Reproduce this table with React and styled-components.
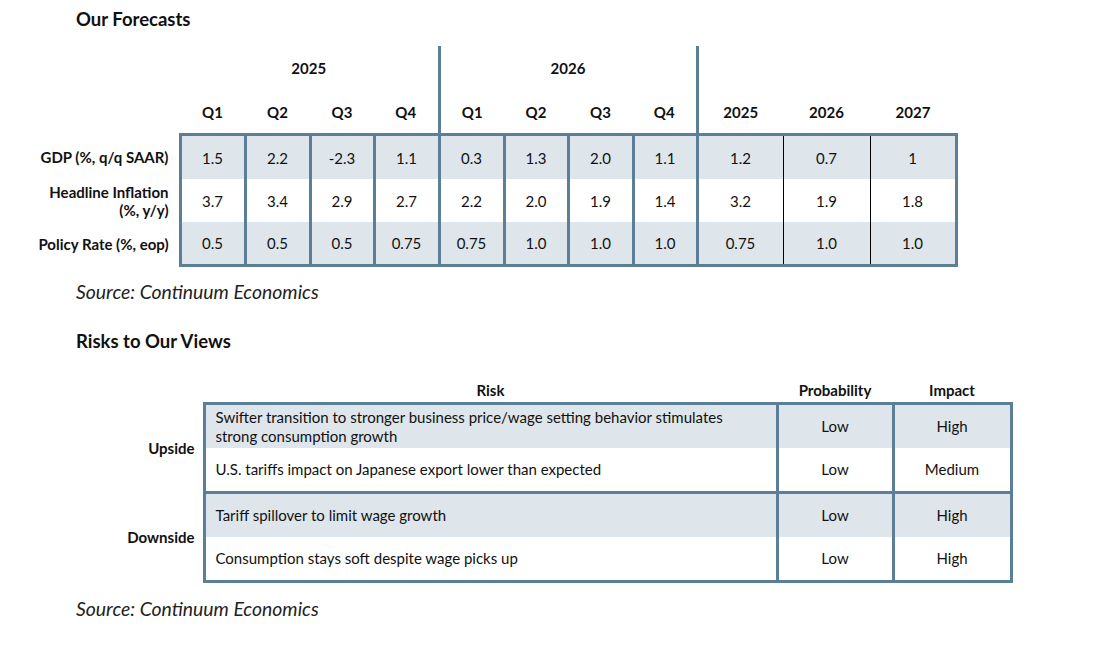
import React from 'react';
import styled, { createGlobalStyle } from 'styled-components';

const GlobalStyle = createGlobalStyle`
  html, body {
    margin: 0;
    padding: 0;
    background: #ffffff;
  }
  body {
    font-family: Lato, 'Open Sans', sans-serif;
    color: #111111;
  }
`;

const BORDER = '#5b7f96';
const FILL = '#dee6eb';
const THICK = `3px solid ${BORDER}`;
const THIN = '1px solid #000';

const Page = styled.div`
  width: 1093px;
  height: 646px;
  padding-top: 8px;
  box-sizing: border-box;
`;

const Title = styled.h2`
  margin: 0 0 0 76px;
  font-size: 18.5px;
  font-weight: 700;
  line-height: 22px;
  height: ${p => p.$h}px;
`;

const Source = styled.p`
  margin: 0 0 0 76px;
  font-size: 19.4px;
  font-style: italic;
  line-height: 24px;
  color: #222;
`;

const Table = styled.table`
  border-collapse: collapse;
  table-layout: fixed;
  font-size: 15px;
`;

const HeadCell = styled.th`
  height: ${p => p.$h}px;
  padding: 0;
  font-weight: 700;
  font-size: 15px;
  text-align: center;
  border-left: ${p => (p.$sep ? THICK : 'none')};
`;

const RowLabel = styled.th`
  padding: 0 10px 0 0;
  text-align: right;
  font-weight: 700;
  font-size: 15px;
  line-height: 18px;
`;

const Cell = styled.td`
  height: ${p => p.$h}px;
  padding: 0;
  text-align: center;
  background: ${p => (p.$fill ? FILL : '#ffffff')};
  border-top: ${p => (p.$top ? THICK : 'none')};
  border-bottom: ${p => (p.$bottom ? THICK : 'none')};
  border-left: ${p => (p.$thinL ? THIN : THICK)};
  border-right: ${p => (p.$thinR ? THIN : THICK)};
`;

const SideLabel = styled.th`
  padding: 0 8px 0 0;
  text-align: right;
  font-weight: 700;
  font-size: 15px;
`;

const RiskCell = styled.td`
  height: ${p => p.$h}px;
  padding: 0 0 0 ${p => (p.$left ? 10 : 0)}px;
  text-align: ${p => (p.$left ? 'left' : 'center')};
  line-height: 19px;
  background: ${p => (p.$fill ? FILL : '#ffffff')};
  border-left: ${THICK};
  border-right: ${THICK};
  border-top: ${p => (p.$top ? THICK : 'none')};
  border-bottom: ${p => (p.$bottom ? THICK : 'none')};
`;

const Spacer = styled.div`
  height: ${p => p.$h}px;
`;

const quarters = ['Q1', 'Q2', 'Q3', 'Q4'];
const annual = ['2025', '2026', '2027'];
const qWidths = [65, 65, 64, 65, 65, 64, 65, 64];
const aWidths = [86, 87, 86];

const forecast = [
  { label: ['GDP (%, q/q SAAR)'], q: ['1.5', '2.2', '-2.3', '1.1', '0.3', '1.3', '2.0', '1.1'], a: ['1.2', '0.7', '1'], fill: true, h: 43 },
  { label: ['Headline Inflation', '(%, y/y)'], q: ['3.7', '3.4', '2.9', '2.7', '2.2', '2.0', '1.9', '1.4'], a: ['3.2', '1.9', '1.8'], fill: false, h: 43 },
  { label: ['Policy Rate (%, eop)'], q: ['0.5', '0.5', '0.5', '0.75', '0.75', '1.0', '1.0', '1.0'], a: ['0.75', '1.0', '1.0'], fill: true, h: 42 },
];

const risks = [
  {
    side: 'Upside',
    rows: [
      { text: ['Swifter transition to stronger business price/wage setting behavior stimulates', 'strong consumption growth'], p: 'Low', i: 'High' },
      { text: ['U.S. tariffs impact on Japanese export lower than expected'], p: 'Low', i: 'Medium' },
    ],
  },
  {
    side: 'Downside',
    rows: [
      { text: ['Tariff spillover to limit wage growth'], p: 'Low', i: 'High' },
      { text: ['Consumption stays soft despite wage picks up'], p: 'Low', i: 'High' },
    ],
  },
];

const ForecastTable = () => (
  <Table style={{ width: 956 }}>
    <colgroup>
      <col style={{ width: 180 }} />
      {qWidths.map((w, i) => <col key={i} style={{ width: w }} />)}
      {aWidths.map((w, i) => <col key={'a' + i} style={{ width: w }} />)}
    </colgroup>
    <thead>
      <tr>
        <HeadCell $h={44} />
        <HeadCell colSpan={4} $h={44}>2025</HeadCell>
        <HeadCell colSpan={4} $h={44} $sep>2026</HeadCell>
        <HeadCell colSpan={3} $h={44} $sep />
      </tr>
      <tr>
        <HeadCell $h={43} />
        {[...quarters, ...quarters].map((q, i) => (
          <HeadCell key={i} $h={43} $sep={i === 4}>{q}</HeadCell>
        ))}
        {annual.map((y, i) => (
          <HeadCell key={y} $h={43} $sep={i === 0}>{y}</HeadCell>
        ))}
      </tr>
    </thead>
    <tbody>
      {forecast.map((r, ri) => {
        const top = ri === 0;
        const bottom = ri === forecast.length - 1;
        return (
          <tr key={ri}>
            <RowLabel>
              {r.label.map((l, li) => <div key={li}>{l}</div>)}
            </RowLabel>
            {r.q.map((v, i) => (
              <Cell key={i} $fill={r.fill} $h={r.h} $top={top} $bottom={bottom}>{v}</Cell>
            ))}
            {r.a.map((v, i) => (
              <Cell
                key={'a' + i}
                $fill={r.fill}
                $h={r.h}
                $top={top}
                $bottom={bottom}
                $thinL={i > 0}
                $thinR={i < 2}
              >
                {v}
              </Cell>
            ))}
          </tr>
        );
      })}
    </tbody>
  </Table>
);

const RiskTable = () => (
  <Table style={{ width: 1011 }}>
    <colgroup>
      <col style={{ width: 204 }} />
      <col style={{ width: 573 }} />
      <col style={{ width: 116 }} />
      <col style={{ width: 118 }} />
    </colgroup>
    <thead>
      <tr>
        <HeadCell $h={25} />
        <HeadCell $h={25}>Risk</HeadCell>
        <HeadCell $h={25}>Probability</HeadCell>
        <HeadCell $h={25}>Impact</HeadCell>
      </tr>
    </thead>
    <tbody>
      {risks.map((g, gi) =>
        g.rows.map((r, ri) => {
          const top = ri === 0;
          const bottom = ri === g.rows.length - 1;
          const fill = ri === 0;
          return (
            <tr key={gi + '-' + ri}>
              {ri === 0 && <SideLabel rowSpan={g.rows.length}>{g.side}</SideLabel>}
              <RiskCell $left $fill={fill} $top={top} $bottom={bottom} $h={43}>
                {r.text.map((t, ti) => <div key={ti}>{t}</div>)}
              </RiskCell>
              <RiskCell $fill={fill} $top={top} $bottom={bottom} $h={43}>{r.p}</RiskCell>
              <RiskCell $fill={fill} $top={top} $bottom={bottom} $h={43}>{r.i}</RiskCell>
            </tr>
          );
        })
      )}
    </tbody>
  </Table>
);

export default function App() {
  return (
    <Page>
      <GlobalStyle />
      <Title $h={38}>Our Forecasts</Title>
      <ForecastTable />
      <Spacer $h={13} />
      <Source>Source: Continuum Economics</Source>
      <Spacer $h={26} />
      <Title $h={47}>Risks to Our Views</Title>
      <RiskTable />
      <Spacer $h={14} />
      <Source>Source: Continuum Economics</Source>
    </Page>
  );
}
